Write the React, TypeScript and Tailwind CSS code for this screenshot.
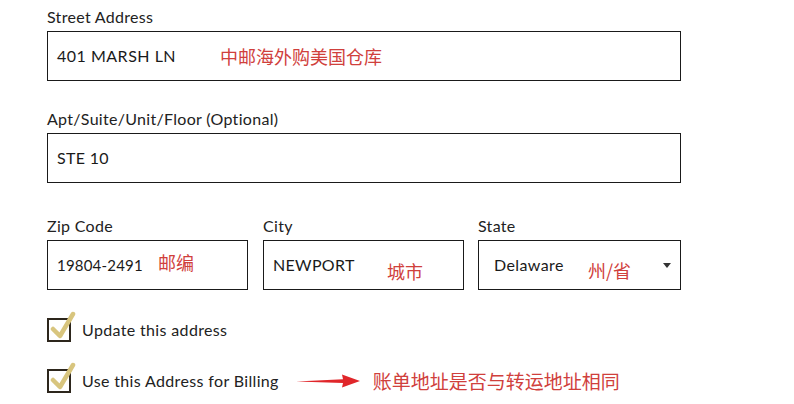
import { ReactNode } from 'react'

const cjk = "font-['Noto_Sans_CJK_SC',sans-serif]"

function Field({ label, children, className = '' }: { label: string; children: ReactNode; className?: string }) {
  return (
    <div className={`flex flex-col ${className}`}>
      <label className="text-[16px] leading-[20px] text-[#222] tracking-[0.3px] mb-[4px]">{label}</label>
      <div className="h-[50px] border-[1.5px] border-[#1a1a1a] bg-white flex items-center px-[9px] relative">
        {children}
      </div>
    </div>
  )
}

function Note({ children, className = '' }: { children: ReactNode; className?: string }) {
  return <span className={`${cjk} text-[#d0403c] text-[18px] ${className}`}>{children}</span>
}

function Check({ label }: { label: string }) {
  return (
    <div className="flex items-center gap-[11px] h-[26px]">
      <div className="relative w-[24px] h-[24px] border-2 border-[#2d261c]">
        <svg className="absolute left-[1px] top-[-9px]" width="26" height="30" viewBox="0 0 26 30">
          <path d="M3 18 L10 25 L23 3" fill="none" stroke="#d8c57e" strokeWidth="4.5" strokeLinecap="round" strokeLinejoin="round" />
        </svg>
      </div>
      <span className="text-[16px] text-[#222] tracking-[0.35px]">{label}</span>
    </div>
  )
}

export default function App() {
  return (
    <div className="w-[794px] h-[404px] bg-white font-['Lato',sans-serif] pl-[47px] pt-[7px] overflow-hidden">
      <div className="w-[634px] flex flex-col">
        <Field label="Street Address">
          <span className="text-[16px] text-[#1a1a1a] tracking-[0.5px] w-[163px]">401 MARSH LN</span>
          <Note>中邮海外购美国仓库</Note>
        </Field>
        <Field label="Apt/Suite/Unit/Floor (Optional)" className="mt-[28px]">
          <span className="text-[16px] text-[#1a1a1a] tracking-[0.3px]">STE 10</span>
        </Field>
        <div className="grid grid-cols-[201px_201px_202px] gap-x-[15px] mt-[33px]">
          <Field label="Zip Code">
            <span className="text-[15px] text-[#1a1a1a] tracking-[0.2px] w-[101px]">19804-2491</span>
            <Note className="-mt-[6px]">邮编</Note>
          </Field>
          <Field label="City">
            <span className="text-[16px] text-[#1a1a1a] tracking-[0.3px] w-[114px]">NEWPORT</span>
            <Note className="mt-[12px] text-[17px]">城市</Note>
          </Field>
          <Field label="State" className="-ml-[1px]">
            <span className="text-[16px] text-[#1a1a1a] tracking-[0.4px] ml-[6px] w-[94px]">Delaware</span>
            <Note className="mt-[10px]">州/省</Note>
            <span className="absolute right-[9px] top-[22px] w-0 h-0 border-l-[4px] border-r-[4px] border-t-[5px] border-l-transparent border-r-transparent border-t-[#333]" />
          </Field>
        </div>
        <div className="mt-[27px]">
          <Check label="Update this address" />
        </div>
        <div className="mt-[24px] flex items-center">
          <Check label="Use this Address for Billing" />
          <svg className="ml-[17px]" width="66" height="16" viewBox="0 0 66 16">
            <path d="M0 8.5 L47 6.3 L46 1.5 L64 8 L46 14.5 L47 10 Z" fill="#e0262a" />
          </svg>
          <span className={`${cjk} text-[#d0403c] text-[19px] ml-[11px]`}>账单地址是否与转运地址相同</span>
        </div>
      </div>
    </div>
  )
}
